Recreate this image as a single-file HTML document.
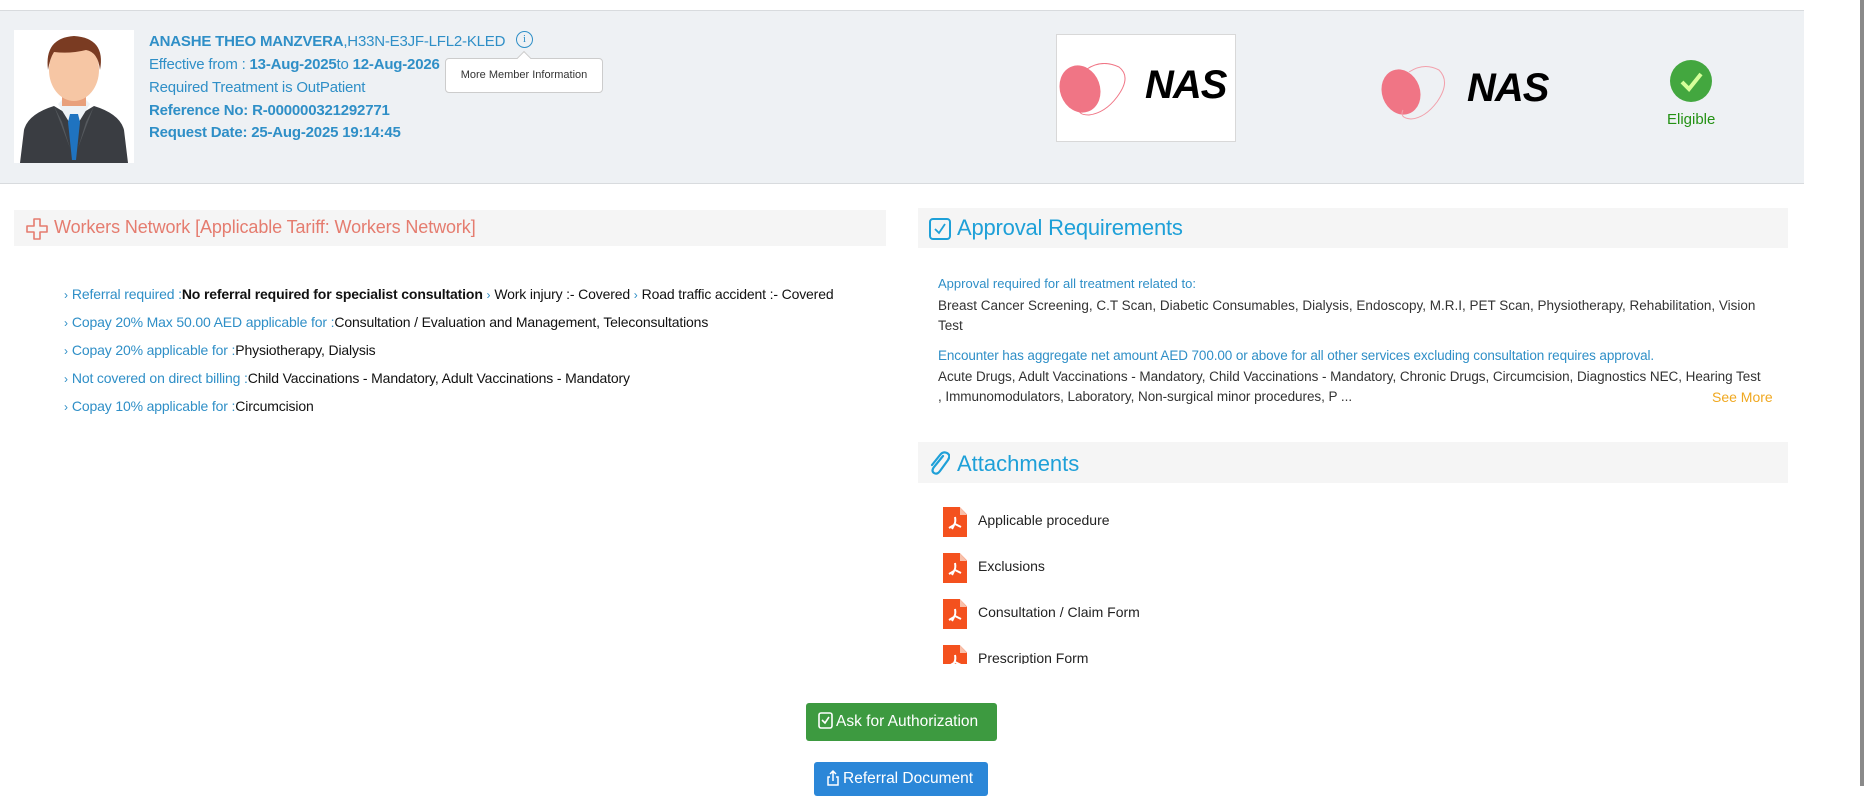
<!DOCTYPE html>
<html><head><meta charset="utf-8"><style>
*{margin:0;padding:0;box-sizing:border-box}
body{width:1869px;height:786px;overflow:hidden;background:#fff;position:relative;font-family:"Liberation Sans Narrow","Liberation Sans",sans-serif;}
.a{position:absolute;white-space:nowrap}
.blue{color:#2f8fc7}
.hd{position:absolute;background:#f5f5f5}
.li{font-size:14px;color:#111;letter-spacing:-0.15px}
.li .k{color:#2f8fc7}
.li .c{color:#2f8fc7;font-size:12px;margin-right:4px}
.pdf{position:absolute;width:24px;height:30px;background:#f4511e;clip-path:polygon(0 0,70% 0,100% 25%,100% 100%,0 100%)}
.pdf:after{content:"";position:absolute;right:0;top:0;width:7px;height:8px;background:#f8c0aa;clip-path:polygon(0 0,100% 100%,0 100%)}
.pdf svg{position:absolute;left:5px;top:9px}
</style></head><body>
<div class="a" style="left:0;top:10px;width:1804px;height:174px;background:#eef1f4;border-top:1px solid #d8dbde;border-bottom:1px solid #d8dbde"></div>
<div class="a" style="left:1859px;top:0;width:10px;height:786px;background:#fff"></div>
<div class="a" style="left:1860px;top:0;width:4px;height:786px;background:#8a8a8a"></div>
<div class="a" style="left:14px;top:30px;width:120px;height:133px;background:#fff;overflow:hidden">
<svg width="120" height="133" viewBox="0 0 120 133">
<path d="M6 133 L10 100 Q14 84 40 76 L60 88 L80 76 Q106 84 110 100 L114 133Z" fill="#3a3d42"/>
<path d="M44 74 L60 100 L76 74 L72 70 L48 70Z" fill="#eef2f6"/>
<path d="M56 84 L64 84 L66 92 L62 130 L58 130 L54 92Z" fill="#1f73c0"/>
<path d="M40 76 L56 118 L48 92Z M80 76 L64 118 L72 92Z" fill="#55595e"/>
<rect x="48" y="56" width="24" height="20" fill="#e8a07c"/>
<ellipse cx="60" cy="40" rx="25" ry="31" fill="#f6c6a4"/>
<path d="M34 40 Q30 8 60 6 Q92 8 86 40 Q84 22 72 20 Q56 24 40 22 Q36 28 34 40Z" fill="#7a3b22"/>
</svg></div>
<div class="a blue" style="left:149px;top:33px;font-size:15px;line-height:18px;letter-spacing:-0.2px"><b style="font-weight:600">ANASHE THEO MANZVERA</b>,H33N-E3JF-LFL2-KLED</div>
<div class="a" style="left:516px;top:31px;width:17px;height:17px;border:1.5px solid #2f8fc7;border-radius:50%;color:#2f8fc7;font-size:11px;text-align:center;line-height:14px;font-family:'Liberation Serif',serif">i</div>
<div class="a blue" style="left:149px;top:56px;font-size:15px;letter-spacing:-0.2px">Effective from : <b>13-Aug-2025</b>to <b>12-Aug-2026</b></div>
<div class="a blue" style="left:149px;top:79px;font-size:15px;letter-spacing:-0.2px">Required Treatment is OutPatient</div>
<div class="a blue" style="left:149px;top:102px;font-size:15px;font-weight:bold;letter-spacing:-0.2px">Reference No: R-000000321292771</div>
<div class="a blue" style="left:149px;top:124px;font-size:15px;font-weight:bold;letter-spacing:-0.2px">Request Date: 25-Aug-2025 19:14:45</div>
<div class="a" style="left:445px;top:58px;width:158px;height:35px;background:#fff;border:1px solid #ccc;border-radius:4px;font-size:11px;color:#333;text-align:center;line-height:33px">More Member Information</div>
<div class="a" style="left:519px;top:53px;width:10px;height:10px;background:#fff;border-left:1px solid #ccc;border-top:1px solid #ccc;transform:rotate(45deg)"></div>
<div class="a" style="left:1056px;top:34px;width:180px;height:108px;background:#fff;border:1px solid #d8d8d8">
<svg class="a" style="left:0;top:28px" width="75" height="56" viewBox="0 0 75 56"><ellipse cx="23" cy="26" rx="20" ry="24" fill="#f07585" transform="rotate(-20 23 26)"/><path d="M30 6 Q45 -4 62 4 Q75 14 60 34 Q48 50 32 52 Q18 52 24 42" fill="none" stroke="#f07585" stroke-width="1"/></svg>
<div class="a" style="left:88px;top:28px;font:italic bold 40px 'Liberation Sans',sans-serif;color:#000;letter-spacing:-1px">NAS</div>
</div>
<svg class="a" style="left:1379px;top:64px" width="75" height="58" viewBox="0 0 75 58"><ellipse cx="22" cy="28" rx="19" ry="23" fill="#f07585" transform="rotate(-20 22 28)"/><path d="M30 8 Q45 -2 60 6 Q72 18 58 38 Q46 54 32 55 Q20 54 24 46" fill="none" stroke="#f2a0ab" stroke-width="1"/></svg>
<div class="a" style="left:1467px;top:66px;font:italic bold 40px 'Liberation Sans',sans-serif;color:#000;letter-spacing:-1px">NAS</div>
<div class="a" style="left:1670px;top:60px;width:42px;height:42px;border-radius:50%;background:#43a73f"><svg width="42" height="42"><path d="M12 22 L19 29 L31 14" fill="none" stroke="#d6ff9a" stroke-width="4"/></svg></div>
<div class="a" style="left:1667px;top:111px;font-size:15px;color:#239113">Eligible</div>
<div class="hd" style="left:14px;top:210px;width:872px;height:36px"></div>
<svg class="a" style="left:25px;top:217px" width="24" height="24" viewBox="0 0 24 24"><path d="M9 2 H15 V9 H22 V15 H15 V22 H9 V15 H2 V9 H9Z" fill="none" stroke="#e57c6f" stroke-width="1.6" stroke-linejoin="round"/></svg>
<div class="a" style="left:54px;top:217px;font-size:18px;color:#e57c6f;letter-spacing:-0.1px">Workers Network [Applicable Tariff: Workers Network]</div>
<div class="a li" style="left:64px;top:286px"><span class="c">›</span><span class="k">Referral required :</span><b>No referral required for specialist consultation</b> <span class="c">›</span>Work injury :- Covered <span class="c">›</span>Road traffic accident :- Covered</div>
<div class="a li" style="left:64px;top:314px"><span class="c">›</span><span class="k">Copay 20% Max 50.00 AED applicable for :</span>Consultation / Evaluation and Management, Teleconsultations</div>
<div class="a li" style="left:64px;top:342px"><span class="c">›</span><span class="k">Copay 20% applicable for :</span>Physiotherapy, Dialysis</div>
<div class="a li" style="left:64px;top:370px"><span class="c">›</span><span class="k">Not covered on direct billing :</span>Child Vaccinations - Mandatory, Adult Vaccinations - Mandatory</div>
<div class="a li" style="left:64px;top:398px"><span class="c">›</span><span class="k">Copay 10% applicable for :</span>Circumcision</div>
<div class="hd" style="left:918px;top:208px;width:870px;height:40px"></div>
<svg class="a" style="left:928px;top:217px" width="24" height="24" viewBox="0 0 24 24"><rect x="2" y="2" width="20" height="20" rx="3" fill="none" stroke="#1ea0d8" stroke-width="2"/><path d="M7 12 L11 16 L17 7" fill="none" stroke="#1ea0d8" stroke-width="1.8"/></svg>
<div class="a" style="left:957px;top:215px;font-size:22px;color:#1ea0d8;letter-spacing:-0.2px">Approval Requirements</div>
<div class="a blue" style="left:938px;top:276px;font-size:13px">Approval required for all treatment related to:</div>
<div class="a" style="left:938px;top:296px;font-size:13.5px;color:#333;line-height:20px">Breast Cancer Screening, C.T Scan, Diabetic Consumables, Dialysis, Endoscopy, M.R.I, PET Scan, Physiotherapy, Rehabilitation, Vision<br>Test</div>
<div class="a blue" style="left:938px;top:348px;font-size:13.5px;letter-spacing:-0.1px">Encounter has aggregate net amount AED 700.00 or above for all other services excluding consultation requires approval.</div>
<div class="a" style="left:938px;top:367px;font-size:13.5px;color:#333;line-height:20px;letter-spacing:-0.05px">Acute Drugs, Adult Vaccinations - Mandatory, Child Vaccinations - Mandatory, Chronic Drugs, Circumcision, Diagnostics NEC, Hearing Test<br>, Immunomodulators, Laboratory, Non-surgical minor procedures, P ...</div>
<div class="a" style="left:1712px;top:389px;font-size:14px;color:#f0a820">See More</div>
<div class="hd" style="left:918px;top:442px;width:870px;height:41px"></div>
<svg class="a" style="left:928px;top:450px" width="22" height="26" viewBox="0 0 22 26"><path d="M15 6 L6 17 Q3 21 6 23 Q9 25 12 21 L20 10 Q23 5 19 3 Q15 1 12 5 L4 15" fill="none" stroke="#1ea0d8" stroke-width="2.2" stroke-linecap="round"/></svg>
<div class="a" style="left:957px;top:451px;font-size:22px;color:#1ea0d8">Attachments</div>
<div class="a" style="left:930px;top:500px;width:300px;height:164px;overflow:hidden">
<div class="pdf" style="left:13px;top:7px"><svg width="14" height="14" viewBox="0 0 14 14"><path d="M7 1 Q8 6 6 9 L1 12 M7 8 L13 11 M6 9 L4 13" fill="none" stroke="#fff" stroke-width="2"/></svg></div>
<div class="a" style="left:48px;top:12px;font-size:14px;color:#222">Applicable procedure</div>
<div class="pdf" style="left:13px;top:53px"><svg width="14" height="14" viewBox="0 0 14 14"><path d="M7 1 Q8 6 6 9 L1 12 M7 8 L13 11 M6 9 L4 13" fill="none" stroke="#fff" stroke-width="2"/></svg></div>
<div class="a" style="left:48px;top:58px;font-size:14px;color:#222">Exclusions</div>
<div class="pdf" style="left:13px;top:99px"><svg width="14" height="14" viewBox="0 0 14 14"><path d="M7 1 Q8 6 6 9 L1 12 M7 8 L13 11 M6 9 L4 13" fill="none" stroke="#fff" stroke-width="2"/></svg></div>
<div class="a" style="left:48px;top:104px;font-size:14px;color:#222">Consultation / Claim Form</div>
<div class="pdf" style="left:13px;top:145px"><svg width="14" height="14" viewBox="0 0 14 14"><path d="M7 1 Q8 6 6 9 L1 12 M7 8 L13 11 M6 9 L4 13" fill="none" stroke="#fff" stroke-width="2"/></svg></div>
<div class="a" style="left:48px;top:150px;font-size:14px;color:#222">Prescription Form</div>
</div>
<div class="a" style="left:806px;top:703px;width:191px;height:38px;background:#3d9a40;border-radius:3px;color:#fff;font-size:15.5px;line-height:38px;padding-left:12px">
<svg style="vertical-align:-3px;margin-right:3px" width="15" height="17" viewBox="0 0 15 17"><rect x="1" y="1" width="13" height="15" rx="2" fill="none" stroke="#fff" stroke-width="1.6"/><path d="M4 8 L7 11 L11 5" fill="none" stroke="#fff" stroke-width="1.6"/></svg>Ask for Authorization</div>
<div class="a" style="left:814px;top:762px;width:174px;height:34px;background:#2b87d8;border-radius:3px;color:#fff;font-size:15.5px;line-height:34px;padding-left:12px">
<svg style="vertical-align:-3px;margin-right:3px" width="14" height="17" viewBox="0 0 14 17"><path d="M4 8 H2 V16 H12 V8 H10 M7 12 V2 M4 5 L7 2 L10 5" fill="none" stroke="#fff" stroke-width="1.5"/></svg>Referral Document</div>
</body></html>
